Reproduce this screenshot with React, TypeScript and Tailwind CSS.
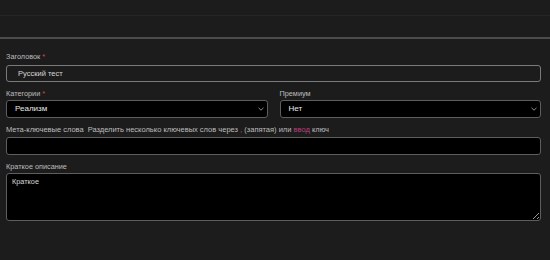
import React from 'react'

const Chevron = () => (
  <svg width="6" height="4" viewBox="0 0 6 4" className="text-[#9a9a9a]">
    <path d="M0.5 0.8 L3 3.2 L5.5 0.8" fill="none" stroke="currentColor" strokeWidth="0.9" />
  </svg>
)

const Label = ({ children, required }: { children: React.ReactNode; required?: boolean }) => (
  <div className="text-[7.3px] leading-[9px] text-[#bdbdbd]">
    {children}
    {required && <span className="text-[#d1485b]"> *</span>}
  </div>
)

const App = () => {
  return (
    <div className="w-[550px] h-[260px] overflow-hidden bg-[#1c1c1c] font-['Liberation_Sans',Arial,sans-serif]">
      {/* top bars */}
      <div className="h-[16px] border-b border-[#262626]" />
      <div className="h-[23px] border-b-2 border-[#4b4b4b]" />

      <div className="pl-[6px] pr-[9px] pt-[13px] flex flex-col">
        {/* Title */}
        <Label required>Заголовок</Label>
        <div className="mt-[4px] h-[17px] rounded-[3px] border border-[#7a7a7a] flex items-center pl-[11px] text-[7.5px] text-[#d6d6d6]">
          Русский тест
        </div>

        {/* Category / Premium */}
        <div className="mt-[7px] grid grid-cols-2 gap-[12px]">
          <div>
            <Label required>Категории</Label>
            <div className="mt-[2px] h-[18px] rounded-[3px] border border-[#5e5e5e] bg-black flex items-center justify-between pl-[8px] pr-[3px] text-[8px] text-[#e8e8e8]">
              <span>Реализм</span>
              <Chevron />
            </div>
          </div>
          <div>
            <Label>Премиум</Label>
            <div className="mt-[2px] h-[18px] rounded-[3px] border border-[#5e5e5e] bg-black flex items-center justify-between pl-[8px] pr-[3px] text-[8px] text-[#e8e8e8]">
              <span>Нет</span>
              <Chevron />
            </div>
          </div>
        </div>

        {/* Meta keywords */}
        <div className="mt-[7px] text-[7.5px] leading-[9px] text-[#bdbdbd]">
          Мета-ключевые слова
          <span className="ml-[4px]">
            Разделить несколько ключевых слов через <span className="text-[#d1485b]">,</span> (запятая) или{' '}
            <span className="text-[#b8407f]">ввод</span> ключ
          </span>
        </div>
        <div className="mt-[3px] h-[18px] rounded-[3px] border border-[#5e5e5e] bg-black" />

        {/* Short description */}
        <div className="mt-[7px]">
          <Label>Краткое описание</Label>
        </div>
        <textarea
          readOnly
          defaultValue="Краткое"
          className="mt-[2px] h-[48px] rounded-[3px] border border-[#5e5e5e] bg-black px-[5px] py-[3px] text-[7.3px] leading-[9px] text-[#d6d6d6] outline-none"
        />
      </div>
    </div>
  )
}

export default App
